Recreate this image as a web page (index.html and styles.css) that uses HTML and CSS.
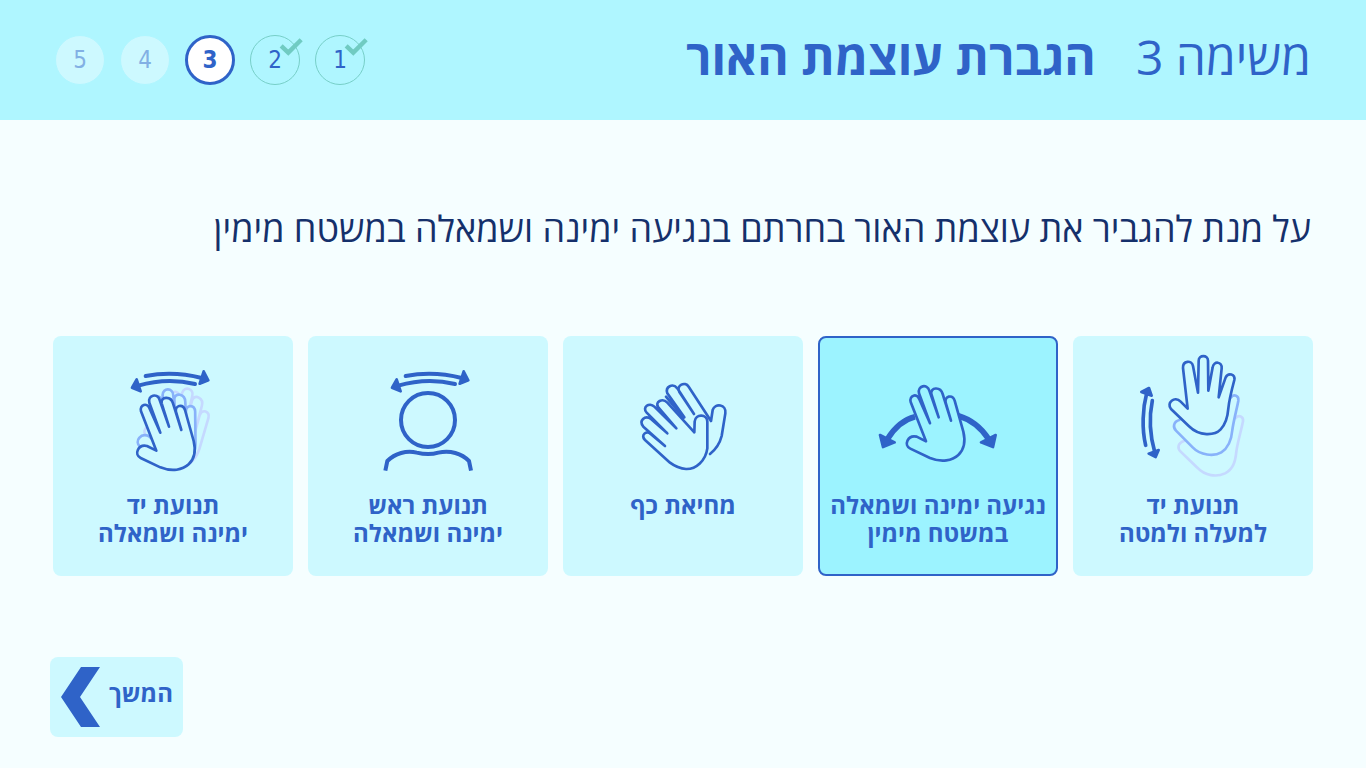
FILE: index.html
```html
<!DOCTYPE html>
<html lang="he" dir="rtl">
<head>
<meta charset="utf-8">
<meta name="viewport" content="width=device-width, initial-scale=1">
<title>משימה 3</title>
<link rel="stylesheet" href="styles.css">
</head>
<body>
<header class="header">
  <h1 class="title"><span class="title-task">משימה 3</span><strong>הגברת עוצמת האור</strong></h1>
  <ol class="steps">
    <li class="step done">1<svg class="check" viewBox="0 0 70 56" aria-hidden="true"><path d="M6 26 L27 46 L65 8"/></svg></li>
    <li class="step done">2<svg class="check" viewBox="0 0 70 56" aria-hidden="true"><path d="M6 26 L27 46 L65 8"/></svg></li>
    <li class="step current" aria-current="step">3</li>
    <li class="step">4</li>
    <li class="step">5</li>
  </ol>
</header>
<main class="main">
  <p class="question">על מנת להגביר את עוצמת האור בחרתם בנגיעה ימינה ושמאלה במשטח מימין</p>
  <div class="cards">
    <button type="button" class="card">
      <svg class="icon" viewBox="-6 0 450 450" aria-hidden="true">
        <path class="ghost-far" d="M192 303 C172 310 172 325 182 335 L232 383 C255 408 290 412 315 400 C338 388 346 368 349 335 C352 310 366 262 369 244 C371 228 356 224 347 234"/>
        <path class="ghost-near" d="M178 240 C160 245 158 262 168 272 L218 322 C241 346 282 350 304 337 C325 324 334 304 337 270 C340 245 352 200 355 182 C357 166 342 162 333 172"/>
        <path class="line" d="M203 206 L182 185 C164 167 138 188 153 207 L207 259 C238 290 284 287 302 268 C317 252 323 232 325 205 C327 184 335 150 343 120 C346 102 325 97 317 112 L296 172 L305 85 C307 64 281 62 278 82 L265 152 L264 62 C264 44 236 44 236 62 L234 158 L219 78 C215 59 188 62 189 84 Z"/>
        <path class="stroke s10" d="M77 316 C65 265 68 205 80 160 M97 182 C85 240 92 295 105 340"/>
        <path class="head" d="M87 144 L64 156 L95 167 Z M107 351 L86 341 L116 330 Z"/>
      </svg>
      <span>תנועת יד<br>למעלה ולמטה</span>
    </button>
    <button type="button" class="card selected" aria-pressed="true">
      <svg class="icon" viewBox="-6 -90 450 450" aria-hidden="true">
        <path class="arc" d="M150 140 Q102 152 68 206 M280 137 Q336 154 370 206"/>
        <path class="head" d="M45 195 L89 217 L54 231 Z M392 195 L348 217 L384 231 Z"/>
        <path class="line" d="M183 214 L155 200 C128 194 115 226 136 236 L195 264 C230 278 262 272 280 255 C298 238 301 210 295 185 L269 92 C262 72 238 78 242 98 L258 152 L233 72 C226 48 195 52 199 72 L221 142 L193 62 C186 40 157 47 162 70 L195 160 L163 88 C156 68 132 76 137 96 Z"/>
      </svg>
      <span>נגיעה ימינה ושמאלה<br>במשטח מימין</span>
    </button>
    <button type="button" class="card">
      <svg class="icon" viewBox="-36 -90 450 450" aria-hidden="true">
        <path class="line" d="M138 80 L190 143 M193 142 L142 70 C135 50 158 38 172 55 L222 132 M222 132 L178 66 C168 45 195 33 206 50 L273 153 L278 120 C285 98 320 103 316 130 L305 198 C299 222 285 240 270 252"/>
        <path class="line" d="M223 187 L224 155 C226 130 262 132 262 155 L262 235 C257 272 228 298 198 297 C178 296 162 287 150 278 L75 210 C60 195 80 180 92 192 L135 228 L70 170 C55 152 75 135 93 147 L142 190 L80 128 C65 112 88 95 103 110 L169 175 L115 112 C103 95 128 83 142 98 Z"/>
      </svg>
      <span>מחיאת כף</span>
    </button>
    <button type="button" class="card">
      <svg class="icon" viewBox="-51 -60 450 450" aria-hidden="true">
        <g id="sway">
          <path class="stroke s12" d="M107 48 Q190 32 275 54 M255 72 Q170 52 85 77"/>
          <path class="head" d="M295 61 L269 71 L281 34 Z M66 83 L80 58 L92 94 Z"/>
        </g>
        <circle class="stroke s12" cx="174" cy="180" r="81"/>
        <path class="shoulders" d="M46 332 L52 303 C75 280 110 270 140 278 C165 284 185 284 205 278 C240 270 275 280 297 303 L303 332"/>
      </svg>
      <span>תנועת ראש<br>ימינה ושמאלה</span>
    </button>
    <button type="button" class="card">
      <svg class="icon" viewBox="-51 -60 450 450" aria-hidden="true">
        <use href="#sway" x="-15"/>
        <path class="ghost-far" transform="translate(-62 38) rotate(32 229 242)" d="M183 214 L155 200 C128 194 115 226 136 236 L195 264 C230 278 262 272 280 255 C298 238 301 210 295 185 L269 92 C262 72 238 78 242 98 L258 152 L233 72 C226 48 195 52 199 72 L221 142 L193 62 C186 40 157 47 162 70 L195 160 L163 88 C156 68 132 76 137 96 Z"/>
        <path class="ghost-near" transform="translate(-66 47) rotate(15 229 242)" d="M183 214 L155 200 C128 194 115 226 136 236 L195 264 C230 278 262 272 280 255 C298 238 301 210 295 185 L269 92 C262 72 238 78 242 98 L258 152 L233 72 C226 48 195 52 199 72 L221 142 L193 62 C186 40 157 47 162 70 L195 160 L163 88 C156 68 132 76 137 96 Z"/>
        <path class="line" transform="translate(-59 58)" d="M183 214 L155 200 C128 194 115 226 136 236 L195 264 C230 278 262 272 280 255 C298 238 301 210 295 185 L269 92 C262 72 238 78 242 98 L258 152 L233 72 C226 48 195 52 199 72 L221 142 L193 62 C186 40 157 47 162 70 L195 160 L163 88 C156 68 132 76 137 96 Z"/>
      </svg>
      <span>תנועת יד<br>ימינה ושמאלה</span>
    </button>
  </div>
  <button type="button" class="next">
    <span>המשך</span>
    <svg class="chevron" viewBox="0 0 39 60" aria-hidden="true"><path d="M20 0 H39 L19 30 L39 60 H20 L0 30 Z"/></svg>
  </button>
</main>
</body>
</html>
```
FILE: styles.css
```css
:root {
  --blue: #2f63c8;
  --tile: #cdf9ff;
}
* { box-sizing: border-box; }
body {
  margin: 0;
  min-height: 100vh;
  background: #f5feff;
  color: var(--blue);
  font-family: "Open Sans", "Noto Sans", sans-serif;
}
button { font: inherit; color: inherit; border: 0; cursor: pointer; }
.header {
  display: flex;
  justify-content: space-between;
  align-items: center;
  height: 120px;
  padding: 0 55px;
  background: #aff6ff;
}
.title {
  display: flex;
  gap: 40px;
  margin: 0;
  padding-bottom: 6px;
  font-size: 48px;
  line-height: 64px;
  font-weight: 400;
}
.title strong { font-weight: 700; }
.steps {
  display: flex;
  gap: 15px;
  margin: 0;
  padding: 0;
  list-style: none;
}
.step {
  position: relative;
  display: flex;
  align-items: center;
  justify-content: center;
  width: 50px;
  height: 50px;
  border: 1px solid #aff6ff;
  border-radius: 50%;
  background: var(--tile);
  color: #82b0e4;
  font-family: "DejaVu Sans Condensed", "DejaVu Sans", sans-serif;
  font-size: 24px;
  line-height: 32px;
}
.done { border-color: #77cfc8; background: none; color: var(--blue); }
.current {
  border: 3px solid var(--blue);
  background: #fff;
  color: var(--blue);
  font-weight: 700;
}
.check {
  position: absolute;
  top: 1px;
  left: 28px;
  width: 24px;
  height: 19px;
}
.check path { fill: none; stroke: #70cbc2; stroke-width: 13; }
.main {
  display: flex;
  flex-direction: column;
  padding: 85px 53px 31px 50px;
}
.question {
  margin: 0;
  padding: 0 2px;
  color: #15306b;
  font-size: 36px;
  line-height: 48px;
}
.cards {
  display: grid;
  grid-template-columns: repeat(5, 1fr);
  gap: 15px;
  margin: 83px 0 81px 3px;
}
.card {
  --fill: var(--tile);
  display: flex;
  flex-direction: column;
  align-items: center;
  min-height: 240px;
  padding: 4px 0 0;
  border-radius: 8px;
  background: var(--fill);
  font-size: 24px;
  font-weight: 700;
  line-height: 28px;
  white-space: nowrap;
}
.selected {
  --fill: #9cf3ff;
  padding-top: 2px;
  border: 2px solid var(--blue);
}
.icon { width: 150px; height: 150px; margin-bottom: 1px; }
.line, .ghost-near, .ghost-far {
  fill: var(--fill);
  stroke: var(--blue);
  stroke-width: 8;
  stroke-linejoin: round;
  stroke-linecap: round;
}
.ghost-near { stroke: #88b2fa; }
.ghost-far { stroke: #c5d9ff; }
.stroke { fill: none; stroke: var(--blue); stroke-linecap: round; }
.s10 { stroke-width: 11; }
.s12 { stroke-width: 12; }
.arc { fill: none; stroke: var(--blue); stroke-width: 17; }
.shoulders { fill: none; stroke: var(--blue); stroke-width: 12; stroke-linejoin: round; }
.head { fill: var(--blue); stroke: var(--blue); stroke-width: 8; stroke-linejoin: round; }
.next {
  display: flex;
  align-items: center;
  align-self: flex-end;
  gap: 9px;
  height: 80px;
  padding: 0 10px 0 11px;
  border-radius: 8px;
  background: var(--tile);
  font-size: 24px;
  font-weight: 700;
  line-height: 32px;
}
.next span { padding-bottom: 8px; }
.chevron { width: 39px; height: 60px; fill: var(--blue); }
```
